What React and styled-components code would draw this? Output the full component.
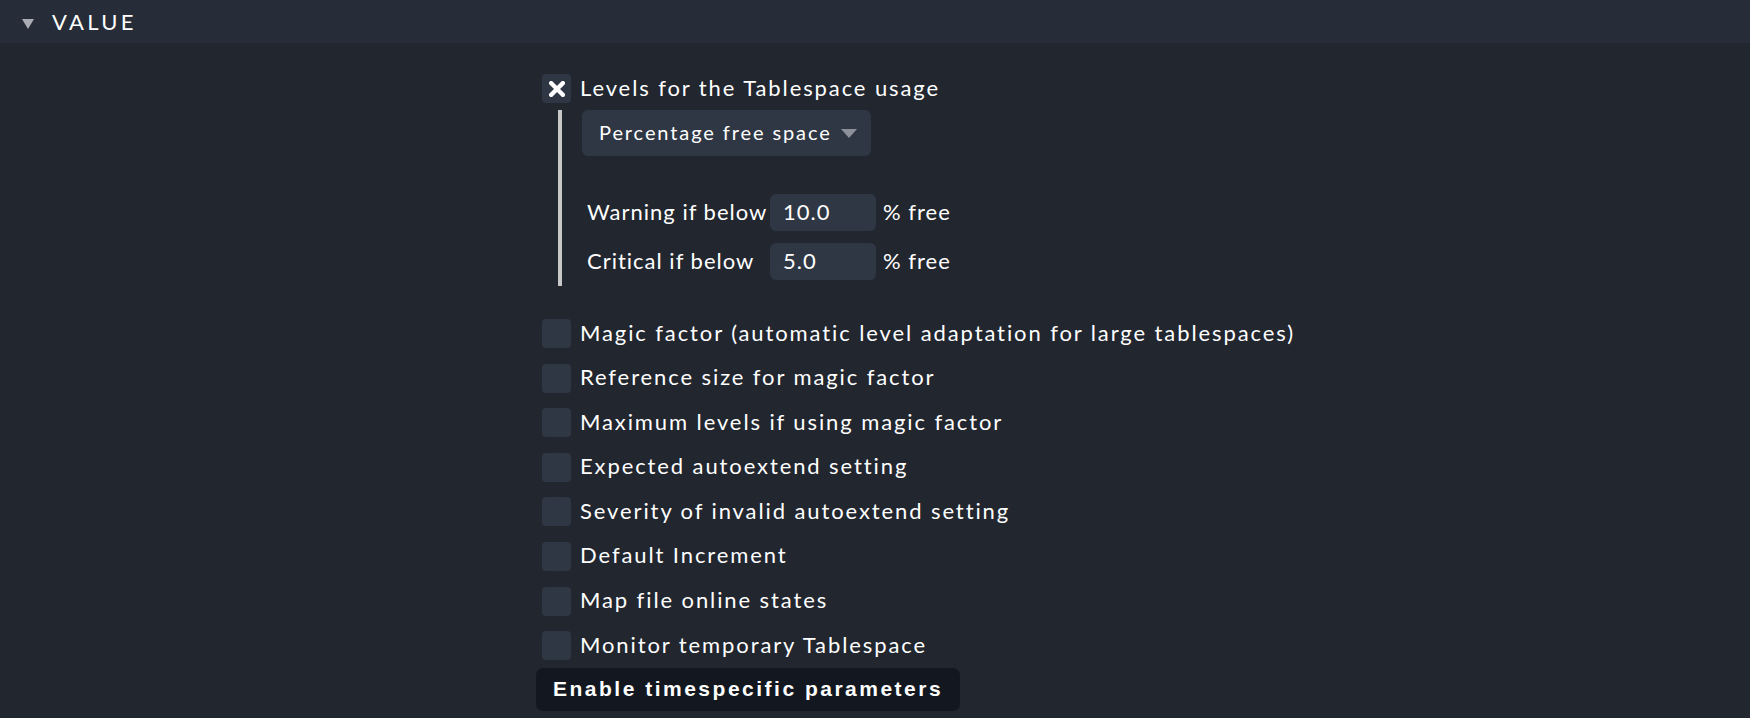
import React from 'react'
import styled, { createGlobalStyle } from 'styled-components'

const GlobalStyle = createGlobalStyle`
    html, body {
        margin: 0;
        padding: 0;
        background: #21262f;
        font-family: Lato, "Noto Sans", sans-serif;
        color: #ffffff;
    }
`

const options = [
    'Magic factor (automatic level adaptation for large tablespaces)',
    'Reference size for magic factor',
    'Maximum levels if using magic factor',
    'Expected autoextend setting',
    'Severity of invalid autoextend setting',
    'Default Increment',
    'Map file online states',
    'Monitor temporary Tablespace',
]

function Cross() {
    return (
        <svg width="16" height="16" viewBox="0 0 16 16">
            <path d="M2.2 2.2 L13.8 13.8 M13.8 2.2 L2.2 13.8" stroke="#fff" strokeWidth="4.4" strokeLinecap="square" />
        </svg>
    )
}

export default function App() {
    return (
        <>
            <GlobalStyle />
            <Header>
                <svg width="12" height="10" viewBox="0 0 12 10">
                    <polygon points="0,0 12,0 6,10" fill="#a9adb3" />
                </svg>
                <Title>VALUE</Title>
            </Header>
            <Main>
                <div />
                <Content>
                    <CheckRow>
                        <Checkbox><Cross /></Checkbox>
                        <Label>Levels for the Tablespace usage</Label>
                    </CheckRow>
                    <Nested>
                        <Dropdown>
                            <span>Percentage free space</span>
                            <svg width="16" height="9" viewBox="0 0 16 9">
                                <polygon points="0,0 16,0 8,9" fill="#8b9099" />
                            </svg>
                        </Dropdown>
                        <Levels>
                            <FieldLabel>Warning if below</FieldLabel>
                            <Input>10.0</Input>
                            <FieldLabel>% free</FieldLabel>
                            <FieldLabel>Critical if below</FieldLabel>
                            <Input>5.0</Input>
                            <FieldLabel>% free</FieldLabel>
                        </Levels>
                    </Nested>
                    <OptionList>
                        {options.map((o) => (
                            <CheckRow key={o}>
                                <Checkbox />
                                <Label>{o}</Label>
                            </CheckRow>
                        ))}
                    </OptionList>
                    <Button>Enable timespecific parameters</Button>
                </Content>
            </Main>
        </>
    )
}

const Header = styled.div`
    height: 43px;
    background: #262d38;
    display: flex;
    align-items: center;
    padding-left: 22px;
    box-sizing: border-box;

    svg {
        margin-top: 4px;
    }
`

const Title = styled.span`
    margin-left: 18px;
    font-size: 22px;
    letter-spacing: 3.3px;
    color: #fff;
`

const Main = styled.div`
    display: grid;
    grid-template-columns: 536px 1fr;
    padding-top: 31px;
    padding-bottom: 8px;
`

const Content = styled.div`
    display: flex;
    flex-direction: column;
    align-items: flex-start;
`

const CheckRow = styled.div`
    display: flex;
    align-items: center;
    gap: 9px;
    margin-left: 6px;
    height: 29px;
`

const Checkbox = styled.div`
    width: 29px;
    height: 29px;
    border-radius: 4px;
    background: #2f3744;
    display: flex;
    align-items: center;
    justify-content: center;
    flex-shrink: 0;
`

const Label = styled.span`
    font-size: 22px;
    letter-spacing: 1.9px;
    color: #fff;
    white-space: nowrap;
    padding-bottom: 3px;
`

const FieldLabel = styled.span`
    font-size: 22px;
    letter-spacing: 1px;
    color: #fff;
    white-space: nowrap;
    padding-bottom: 2px;
`

const Nested = styled.div`
    margin-left: 22px;
    margin-top: 7px;
    border-left: 4px solid #c8c8c8;
    padding: 0 0 6px 20px;
    display: flex;
    flex-direction: column;
    align-items: flex-start;
`

const Dropdown = styled.div`
    width: 289px;
    height: 46px;
    box-sizing: border-box;
    background: #2f3744;
    border-radius: 6px;
    display: flex;
    align-items: center;
    justify-content: space-between;
    padding: 0 14px 2px 17px;
    font-size: 20px;
    letter-spacing: 1.9px;
    color: #fff;

    svg {
        margin-top: 2px;
    }
`

const Levels = styled.div`
    display: grid;
    grid-template-columns: 178px auto auto;
    align-items: center;
    column-gap: 5px;
    row-gap: 12px;
    margin-top: 38px;
    padding-left: 5px;

    & > span:nth-child(3n) {
        margin-left: 2px;
    }
`

const Input = styled.div`
    width: 106px;
    height: 37px;
    box-sizing: border-box;
    background: #2f3744;
    border-radius: 6px;
    padding: 0 0 2px 13px;
    display: flex;
    align-items: center;
    font-size: 22px;
    letter-spacing: 1px;
    color: #fff;
`

const OptionList = styled.div`
    display: flex;
    flex-direction: column;
    gap: 15.6px;
    margin-top: 33px;
`

const Button = styled.button`
    margin-top: 8px;
    height: 43px;
    padding: 0 17px 2px;
    border: 0;
    border-radius: 7px;
    background: #131820;
    color: #fff;
    font-family: "Liberation Sans", Arial, sans-serif;
    font-weight: bold;
    font-size: 21px;
    letter-spacing: 2.5px;
`
